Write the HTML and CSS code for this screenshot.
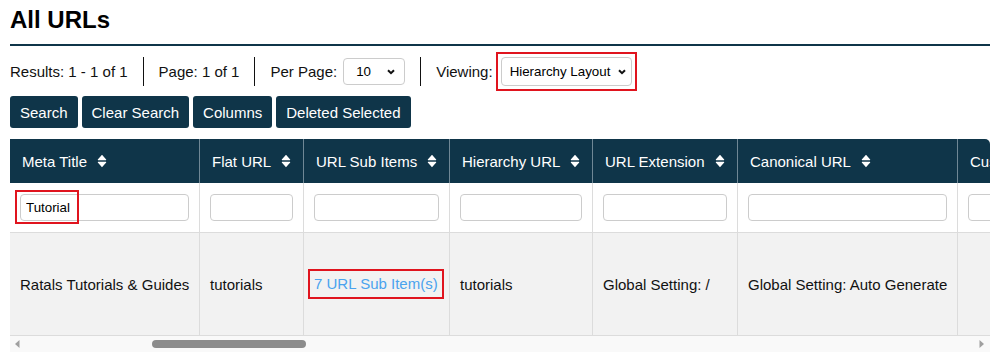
FILE: index.html
```html
<!DOCTYPE html>
<html lang="en">
<head>
    <meta charset="UTF-8">
    <meta name="viewport" content="width=device-width, initial-scale=1.0">
    <title>All URLs</title>
    <link rel="stylesheet" href="styles.css">
</head>
<body>
    <h1 class="page-title">All URLs</h1>

    <div class="toolbar">
        <span class="stat">Results: 1 - 1 of 1</span>
        <span class="stat">Page: 1 of 1</span>
        <span class="stat">Per Page:
            <span class="select per-page">
                <span>10</span>
                <svg class="chevron" width="8" height="6" viewBox="0 0 8 6"><path d="M1 1.2 L4 4.2 L7 1.2" fill="none" stroke="#111" stroke-width="2"/></svg>
            </span>
        </span>
        <span class="stat">Viewing:
            <span class="marked">
                <span class="select layout">
                    <span>Hierarchy Layout</span>
                    <svg class="chevron" width="8" height="6" viewBox="0 0 8 6"><path d="M1 1.2 L4 4.2 L7 1.2" fill="none" stroke="#111" stroke-width="2"/></svg>
                </span>
            </span>
        </span>
    </div>

    <div class="actions">
        <button class="btn">Search</button>
        <button class="btn">Clear Search</button>
        <button class="btn">Columns</button>
        <button class="btn">Deleted Selected</button>
    </div>

    <div class="table-wrap">
        <div class="table-scroll">
            <table class="url-table">
                <colgroup>
                    <col style="width:190px">
                    <col style="width:104px">
                    <col style="width:146px">
                    <col style="width:143px">
                    <col style="width:145px">
                    <col style="width:220px">
                    <col style="width:200px">
                    <col style="width:160px">
                </colgroup>
                <thead>
                    <tr class="head-row">
                        <th>Meta Title <svg class="sort" width="10" height="14" viewBox="0 0 10 14"><path d="M5 0.8 L9.2 5.6 Q9.4 6.2 8.8 6.2 L1.2 6.2 Q0.6 6.2 0.8 5.6 Z M5 13.2 L9.2 8.4 Q9.4 7.8 8.8 7.8 L1.2 7.8 Q0.6 7.8 0.8 8.4 Z" fill="#fff"/></svg></th>
                        <th>Flat URL <svg class="sort" width="10" height="14" viewBox="0 0 10 14"><path d="M5 0.8 L9.2 5.6 Q9.4 6.2 8.8 6.2 L1.2 6.2 Q0.6 6.2 0.8 5.6 Z M5 13.2 L9.2 8.4 Q9.4 7.8 8.8 7.8 L1.2 7.8 Q0.6 7.8 0.8 8.4 Z" fill="#fff"/></svg></th>
                        <th>URL Sub Items <svg class="sort" width="10" height="14" viewBox="0 0 10 14"><path d="M5 0.8 L9.2 5.6 Q9.4 6.2 8.8 6.2 L1.2 6.2 Q0.6 6.2 0.8 5.6 Z M5 13.2 L9.2 8.4 Q9.4 7.8 8.8 7.8 L1.2 7.8 Q0.6 7.8 0.8 8.4 Z" fill="#fff"/></svg></th>
                        <th>Hierarchy URL <svg class="sort" width="10" height="14" viewBox="0 0 10 14"><path d="M5 0.8 L9.2 5.6 Q9.4 6.2 8.8 6.2 L1.2 6.2 Q0.6 6.2 0.8 5.6 Z M5 13.2 L9.2 8.4 Q9.4 7.8 8.8 7.8 L1.2 7.8 Q0.6 7.8 0.8 8.4 Z" fill="#fff"/></svg></th>
                        <th>URL Extension <svg class="sort" width="10" height="14" viewBox="0 0 10 14"><path d="M5 0.8 L9.2 5.6 Q9.4 6.2 8.8 6.2 L1.2 6.2 Q0.6 6.2 0.8 5.6 Z M5 13.2 L9.2 8.4 Q9.4 7.8 8.8 7.8 L1.2 7.8 Q0.6 7.8 0.8 8.4 Z" fill="#fff"/></svg></th>
                        <th>Canonical URL <svg class="sort" width="10" height="14" viewBox="0 0 10 14"><path d="M5 0.8 L9.2 5.6 Q9.4 6.2 8.8 6.2 L1.2 6.2 Q0.6 6.2 0.8 5.6 Z M5 13.2 L9.2 8.4 Q9.4 7.8 8.8 7.8 L1.2 7.8 Q0.6 7.8 0.8 8.4 Z" fill="#fff"/></svg></th>
                        <th>Custom URL <svg class="sort" width="10" height="14" viewBox="0 0 10 14"><path d="M5 0.8 L9.2 5.6 Q9.4 6.2 8.8 6.2 L1.2 6.2 Q0.6 6.2 0.8 5.6 Z M5 13.2 L9.2 8.4 Q9.4 7.8 8.8 7.8 L1.2 7.8 Q0.6 7.8 0.8 8.4 Z" fill="#fff"/></svg></th>
                        <th>Status</th>
                    </tr>
                </thead>
                <tbody>
                    <tr class="filter-row">
                        <td class="annotated"><input class="filter" type="text" value="Tutorial"><span class="mark-box"></span></td>
                        <td><input class="filter" type="text"></td>
                        <td><input class="filter" type="text"></td>
                        <td><input class="filter" type="text"></td>
                        <td><input class="filter" type="text"></td>
                        <td><input class="filter" type="text"></td>
                        <td><input class="filter" type="text"></td>
                        <td><input class="filter" type="text"></td>
                    </tr>
                    <tr class="data-row">
                        <td>Ratals Tutorials &amp; Guides</td>
                        <td>tutorials</td>
                        <td><a class="sub-link" href="#">7 URL Sub Item(s)</a></td>
                        <td>tutorials</td>
                        <td>Global Setting: /</td>
                        <td>Global Setting: Auto Generate</td>
                        <td></td>
                        <td></td>
                    </tr>
                </tbody>
            </table>
        </div>
        <div class="scrollbar">
            <svg class="arrow" width="5" height="8" viewBox="0 0 5 8"><path d="M4.5 0 L0 4 L4.5 8 Z" fill="#a0a0a0"/></svg>
            <div class="track"><span class="thumb"></span></div>
            <svg class="arrow" width="5" height="8" viewBox="0 0 5 8"><path d="M0.5 0 L5 4 L0.5 8 Z" fill="#a0a0a0"/></svg>
        </div>
    </div>
</body>
</html>
```

FILE: styles.css
```css
body {
    font-family: "Liberation Sans", Arial, sans-serif;
    font-size: 15px;
    margin: 0;
    padding: 0 10px;
    color: #111111;
    background: #ffffff;
}
.page-title {
    font-size: 24px;
    line-height: 28px;
    font-weight: bold;
    margin: 0;
    padding: 6px 0 10px;
    border-bottom: 2px solid #0f3549;
    color: #000000;
}
.toolbar {
    display: flex;
    align-items: center;
    margin-top: 11px;
    height: 29px;
}
.stat {
    display: flex;
    align-items: center;
    gap: 6px;
    height: 29px;
    padding: 0 15px;
    border-left: 1px solid #111111;
}
.stat:first-child {
    padding-left: 0;
    border-left: none;
}
.select {
    display: flex;
    align-items: center;
    justify-content: space-between;
    box-sizing: border-box;
    height: 27px;
    border: 1px solid #cccccc;
    border-radius: 4px;
    background: #ffffff;
    font-size: 13.33px;
    color: #000000;
}
.per-page {
    width: 62px;
    padding: 0 9px 0 12px;
}
.layout {
    width: 131px;
    height: 29px;
    padding: 0 5px 0 8px;
}
.marked {
    display: flex;
    padding: 3px;
    border: 2px solid #e0141e;
    margin-left: -3px;
}
.actions {
    display: flex;
    gap: 4px;
    margin-top: 10px;
}
.btn {
    height: 32px;
    padding: 0 10px;
    border: none;
    border-radius: 3px;
    background: #0f3549;
    color: #ffffff;
    font-family: inherit;
    font-size: 15px;
}
.table-wrap {
    margin-top: 11px;
    border-top-right-radius: 5px;
    overflow: hidden;
}
.table-scroll {
    overflow: hidden;
}
.url-table {
    table-layout: fixed;
    border-collapse: separate;
    border-spacing: 0;
    width: 1308px;
}
.url-table th,
.url-table td {
    box-sizing: border-box;
    text-align: left;
    vertical-align: middle;
    border-right: 1px solid #dcdcdc;
    white-space: nowrap;
}
.head-row th {
    height: 44px;
    padding: 0 12px;
    background: #0f3549;
    color: #ffffff;
    font-weight: normal;
    border-right-color: #6f8795;
}
.sort {
    vertical-align: -1px;
    margin-left: 6px;
}
.filter-row td {
    height: 49px;
    padding: 0 10px;
    background: #ffffff;
}
.annotated {
    position: relative;
}
.filter {
    display: block;
    box-sizing: border-box;
    width: 100%;
    height: 27px;
    padding: 0 5px;
    border: 1px solid #cccccc;
    border-radius: 4px;
    font-family: inherit;
    font-size: 13.33px;
    color: #000000;
}
.mark-box {
    position: absolute;
    left: 5px;
    top: 7px;
    width: 64px;
    height: 34px;
    box-sizing: border-box;
    border: 2px solid #e0141e;
}
.data-row td {
    height: 104px;
    padding: 0 10px;
    background: #f2f2f2;
    border-top: 1px solid #dcdcdc;
    border-bottom: 1px solid #dcdcdc;
}
.sub-link {
    display: inline-block;
    margin-left: -6px;
    padding: 4px 4px;
    line-height: 18px;
    border: 2px solid #e0141e;
    color: #4aa3ee;
    text-decoration: none;
}
.scrollbar {
    display: flex;
    align-items: center;
    height: 16px;
    padding: 0 6px 0 5px;
    gap: 4px;
    background: #f9f9f9;
}
.track {
    flex: 1;
    display: flex;
}
.thumb {
    width: 154px;
    height: 8px;
    margin-left: 128px;
    border-radius: 4px;
    background: #8c8c8c;
}
```
